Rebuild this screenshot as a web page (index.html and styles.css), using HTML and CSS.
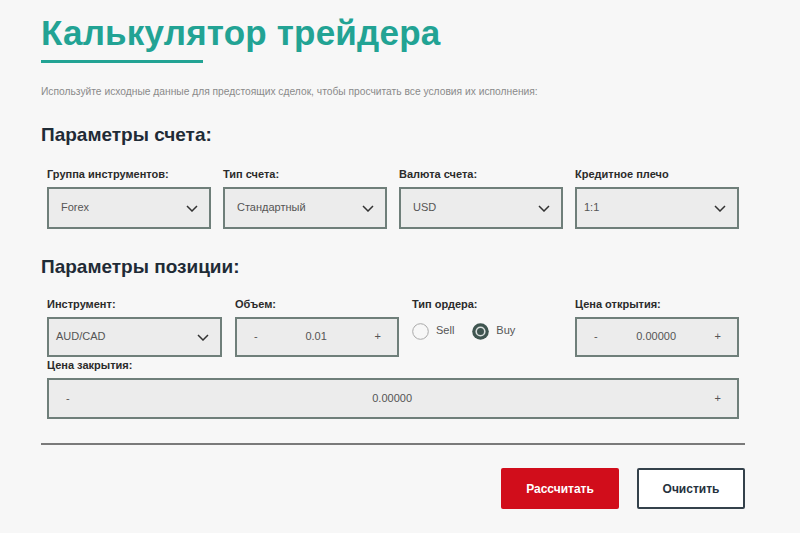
FILE: index.html
```html
<!DOCTYPE html>
<html lang="ru">
<head>
<meta charset="utf-8">
<title>Калькулятор трейдера</title>
<link rel="stylesheet" href="styles.css">
</head>
<body>
<div class="page">
  <h1 class="title">Калькулятор трейдера</h1>
  <div class="title-bar"></div>
  <p class="subtitle">Используйте исходные данные для предстоящих сделок, чтобы просчитать все условия их исполнения:</p>

  <h2 class="section-title">Параметры счета:</h2>
  <div class="grid grid-account">
    <div class="field">
      <div class="label">Группа инструментов:</div>
      <div class="select"><span>Forex</span><svg class="chev" width="12" height="7" viewBox="0 0 12 7"><path d="M1 1l5 5 5-5" fill="none" stroke="#333" stroke-width="1.5"/></svg></div>
    </div>
    <div class="field">
      <div class="label">Тип счета:</div>
      <div class="select"><span>Стандартный</span><svg class="chev" width="12" height="7" viewBox="0 0 12 7"><path d="M1 1l5 5 5-5" fill="none" stroke="#333" stroke-width="1.5"/></svg></div>
    </div>
    <div class="field">
      <div class="label">Валюта счета:</div>
      <div class="select"><span>USD</span><svg class="chev" width="12" height="7" viewBox="0 0 12 7"><path d="M1 1l5 5 5-5" fill="none" stroke="#333" stroke-width="1.5"/></svg></div>
    </div>
    <div class="field">
      <div class="label">Кредитное плечо</div>
      <div class="select select-tight"><span>1:1</span><svg class="chev" width="12" height="7" viewBox="0 0 12 7"><path d="M1 1l5 5 5-5" fill="none" stroke="#333" stroke-width="1.5"/></svg></div>
    </div>
  </div>

  <h2 class="section-title section-title-2">Параметры позиции:</h2>
  <div class="grid grid-position">
    <div class="field">
      <div class="label">Инструмент:</div>
      <div class="select select-tight select-short"><span>AUD/CAD</span><svg class="chev" width="12" height="7" viewBox="0 0 12 7"><path d="M1 1l5 5 5-5" fill="none" stroke="#333" stroke-width="1.5"/></svg></div>
    </div>
    <div class="field">
      <div class="label">Объем:</div>
      <div class="stepper"><span>-</span><span>0.01</span><span>+</span></div>
    </div>
    <div class="field">
      <div class="label">Тип ордера:</div>
      <div class="radios">
        <label class="radio"><svg width="17" height="17" viewBox="0 0 17 17"><circle cx="8.5" cy="8.5" r="7.8" fill="#f7f7f7" stroke="#a9a9a9" stroke-width="1"/></svg><span>Sell</span></label>
        <label class="radio"><svg width="17" height="17" viewBox="0 0 17 17"><circle cx="8.5" cy="8.5" r="8.3" fill="#3f5550"/><circle cx="8.5" cy="8.5" r="4.3" fill="#3f5550" stroke="#d9dedd" stroke-width="1.6"/></svg><span>Buy</span></label>
      </div>
    </div>
    <div class="field">
      <div class="label">Цена открытия:</div>
      <div class="stepper"><span>-</span><span>0.00000</span><span>+</span></div>
    </div>
  </div>
  <div class="grid grid-close">
    <div class="field">
      <div class="label">Цена закрытия:</div>
      <div class="stepper stepper-wide"><span>-</span><span>0.00000</span><span>+</span></div>
    </div>
  </div>

  <div class="divider"></div>

  <div class="actions">
    <button class="btn btn-primary">Рассчитать</button>
    <button class="btn btn-secondary">Очистить</button>
  </div>
</div>
</body>
</html>
```

FILE: styles.css
```css
html, body {
  margin: 0;
  padding: 0;
  background: #f7f7f7;
}

body {
  font-family: "Liberation Sans", Arial, sans-serif;
  color: #2b2b2b;
}

.page {
  width: 704px;
  padding: 13px 0 0 41px;
}

.title {
  margin: 0;
  font-size: 35px;
  line-height: 40px;
  font-weight: 700;
  color: #22a394;
  letter-spacing: 0.2px;
}

.title-bar {
  width: 162px;
  height: 3px;
  margin-top: 7px;
  background: #22a394;
}

.subtitle {
  margin: 22px 0 0;
  font-size: 10.26px;
  line-height: 13px;
  color: #8a8a8a;
}

.section-title {
  margin: 25px 0 0;
  font-size: 19px;
  line-height: 24px;
  font-weight: 700;
  color: #1f2b36;
}

.section-title-2 {
  margin-top: 26px;
}

.grid {
  display: grid;
  padding: 0 6px;
  grid-template-columns: 1fr;
}

.grid-account {
  margin-top: 20px;
  grid-template-columns: repeat(4, 164px);
  column-gap: 12px;
}

.grid-position {
  margin-top: 18px;
  grid-template-columns: 175px 164px 150px 164px;
  column-gap: 13px;
}

.grid-close {
  margin-top: 1px;
}

.label {
  font-size: 11px;
  line-height: 14px;
  font-weight: 700;
  color: #2b2b2b;
  margin-bottom: 6px;
}

.select {
  box-sizing: border-box;
  height: 42px;
  display: flex;
  align-items: center;
  justify-content: space-between;
  padding: 0 11px 0 12px;
  background: #ececec;
  border: 2px solid #6f7f7a;
  font-size: 11px;
  color: #555;
}

.select span {
  margin-top: -3px;
}

.select-tight {
  padding-left: 7px;
}

.select-short {
  height: 40px;
}

.chev {
  display: block;
}

.stepper {
  box-sizing: border-box;
  height: 40px;
  display: flex;
  align-items: center;
  justify-content: space-between;
  padding: 0 16px 0 17px;
  background: #ececec;
  border: 2px solid #6f7f7a;
  font-size: 11px;
  color: #555;
}

.stepper span {
  margin-top: -2px;
}

.stepper-wide {
  height: 41px;
}

.radios {
  display: flex;
  align-items: center;
  gap: 18px;
  margin-top: 12px;
}

.radio {
  display: flex;
  align-items: center;
  gap: 7px;
  font-size: 11px;
  color: #555;
}

.radio svg {
  display: block;
}

.radio span {
  margin-top: -3px;
}

.divider {
  height: 2px;
  margin-top: 24px;
  background: #7a7a7a;
}

.actions {
  display: flex;
  justify-content: flex-end;
  gap: 18px;
  margin-top: 23px;
}

.btn {
  box-sizing: border-box;
  height: 41px;
  font-family: "Liberation Sans", Arial, sans-serif;
  font-size: 12px;
  font-weight: 700;
  cursor: pointer;
}

.btn-primary {
  width: 118px;
  background: #d10d1b;
  color: #fff;
  border: none;
  border-radius: 2px;
}

.btn-secondary {
  width: 108px;
  background: #fff;
  color: #26323d;
  border: 2px solid #34414b;
  border-radius: 2px;
}
```
